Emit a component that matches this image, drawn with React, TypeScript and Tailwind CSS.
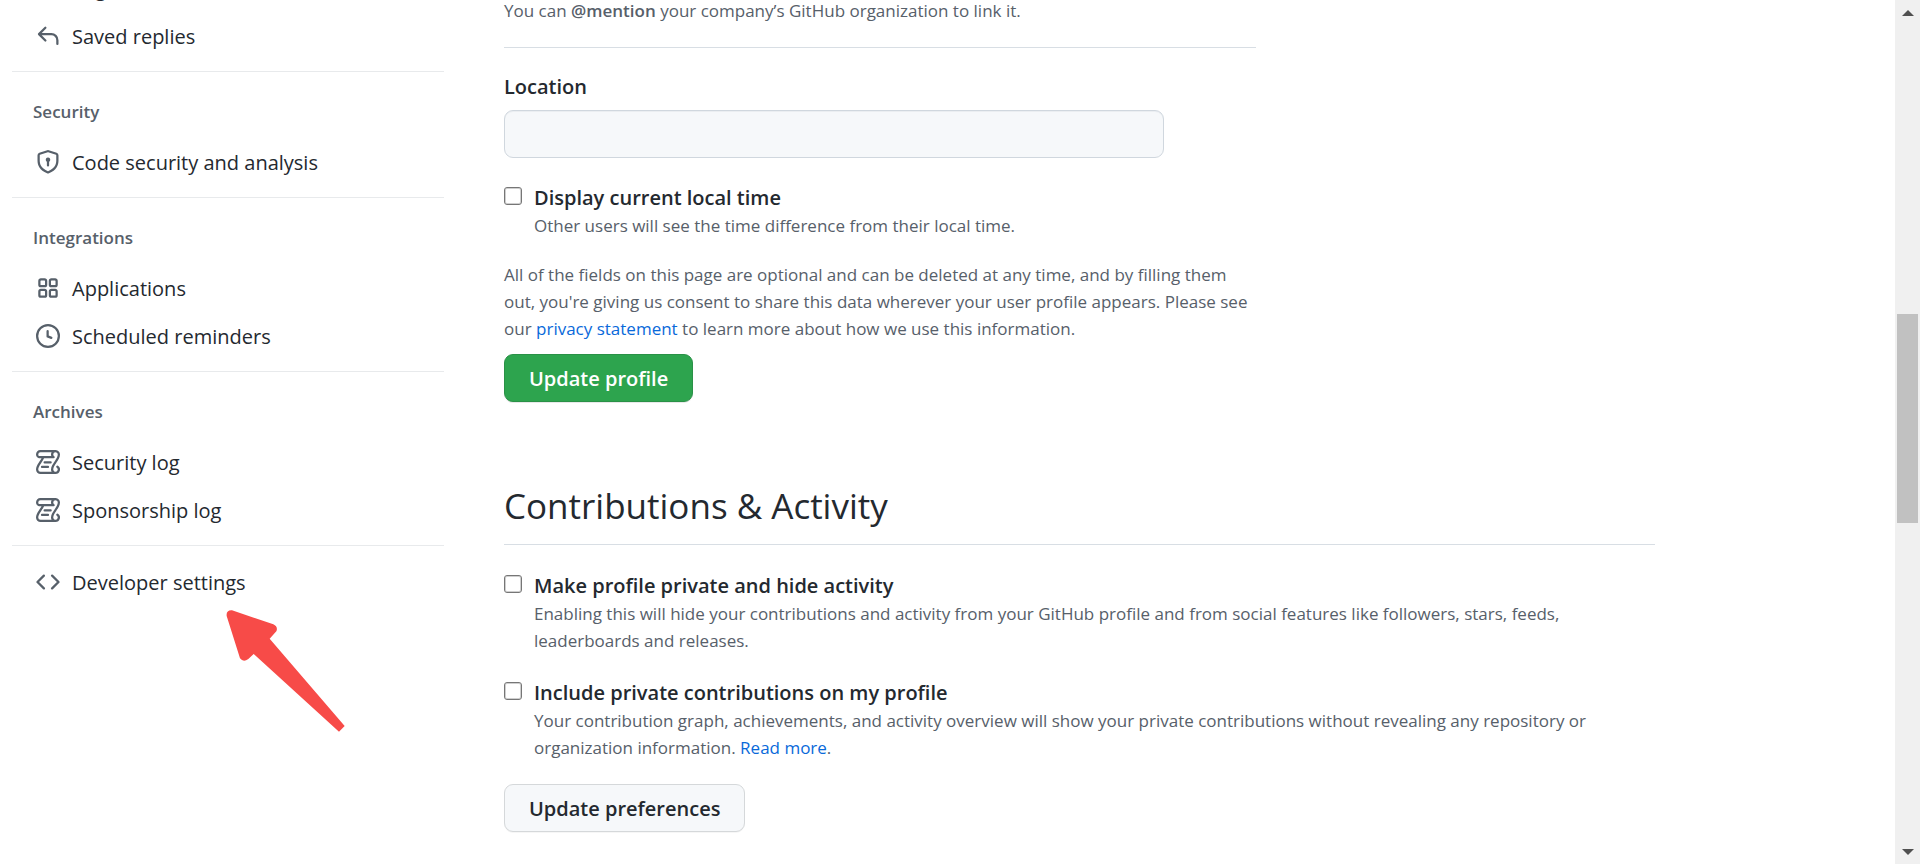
import type { ReactNode } from "react";

const icons = {
  browser:
    "M0 2.75C0 1.784.784 1 1.75 1h12.5c.966 0 1.75.784 1.75 1.75v10.5A1.75 1.75 0 0114.25 15H1.75A1.75 1.75 0 010 13.25V2.75zM14.5 6h-13v7.25c0 .138.112.25.25.25h12.5a.25.25 0 00.25-.25V6z",
  reply:
    "M6.78 1.97a.75.75 0 010 1.06L3.81 6h6.44A4.75 4.75 0 0115 10.75v2.5a.75.75 0 01-1.5 0v-2.5a3.25 3.25 0 00-3.25-3.25H3.81l2.97 2.97a.75.75 0 11-1.06 1.06L1.47 7.28a.75.75 0 010-1.06l4.25-4.25a.75.75 0 011.06 0z",
  shield:
    "M8.533.133a1.75 1.75 0 00-1.066 0l-5.25 1.68A1.75 1.75 0 001 3.48V7c0 1.566.32 3.182 1.303 4.682.983 1.498 2.585 2.813 5.032 3.855a1.7 1.7 0 001.33 0c2.447-1.042 4.049-2.357 5.032-3.855C14.68 10.182 15 8.566 15 7V3.48a1.75 1.75 0 00-1.217-1.667L8.533.133zm-.61 1.429a.25.25 0 01.153 0l5.25 1.68a.25.25 0 01.174.238V7c0 1.358-.275 2.666-1.057 3.86-.784 1.194-2.121 2.34-4.366 3.297a.2.2 0 01-.154 0c-2.245-.956-3.582-2.104-4.366-3.298C2.775 9.666 2.5 8.36 2.5 7V3.48a.25.25 0 01.174-.237l5.25-1.68zM9.5 6.5a1.5 1.5 0 01-.75 1.3v2.45a.75.75 0 01-1.5 0V7.8A1.5 1.5 0 119.5 6.5z",
  apps:
    "M1.5 3.25c0-.966.784-1.75 1.75-1.75h2.5c.966 0 1.75.784 1.75 1.75v2.5A1.75 1.75 0 015.75 7.5h-2.5A1.75 1.75 0 011.5 5.75v-2.5zM3.25 3a.25.25 0 00-.25.25v2.5c0 .138.112.25.25.25h2.5A.25.25 0 006 5.75v-2.5A.25.25 0 005.75 3h-2.5zM1.5 10.25c0-.966.784-1.75 1.75-1.75h2.5c.966 0 1.75.784 1.75 1.75v2.5a1.75 1.75 0 01-1.75 1.75h-2.5a1.75 1.75 0 01-1.75-1.75v-2.5zm1.75-.25a.25.25 0 00-.25.25v2.5c0 .138.112.25.25.25h2.5a.25.25 0 00.25-.25v-2.5a.25.25 0 00-.25-.25h-2.5zM8.5 3.25c0-.966.784-1.75 1.75-1.75h2.5c.966 0 1.75.784 1.75 1.75v2.5a1.75 1.75 0 01-1.75 1.75h-2.5A1.75 1.75 0 018.5 5.75v-2.5zM10.25 3a.25.25 0 00-.25.25v2.5c0 .138.112.25.25.25h2.5a.25.25 0 00.25-.25v-2.5a.25.25 0 00-.25-.25h-2.5zM8.5 10.25c0-.966.784-1.75 1.75-1.75h2.5c.966 0 1.75.784 1.75 1.75v2.5a1.75 1.75 0 01-1.75 1.75h-2.5a1.75 1.75 0 01-1.75-1.75v-2.5zm1.75-.25a.25.25 0 00-.25.25v2.5c0 .138.112.25.25.25h2.5a.25.25 0 00.25-.25v-2.5a.25.25 0 00-.25-.25h-2.5z",
  clock:
    "M1.5 8a6.5 6.5 0 1113 0 6.5 6.5 0 01-13 0zM8 0a8 8 0 100 16A8 8 0 008 0zm.5 4.75a.75.75 0 00-1.5 0v3.5a.75.75 0 00.471.696l2.5 1a.75.75 0 00.557-1.392L8.5 7.742V4.75z",
  log:
    "M5 8.25a.75.75 0 01.75-.75h4a.75.75 0 010 1.5h-4A.75.75 0 015 8.25zM4 10.5A.75.75 0 004 12h4a.75.75 0 000-1.5H4zM13-.005c1.654 0 3 1.328 3 3 0 .982-.338 1.933-.783 2.818-.443.879-1.028 1.758-1.582 2.588l-.011.017c-.568.853-1.104 1.659-1.501 2.446-.398.789-.623 1.494-.623 2.136a1.5 1.5 0 102.333-1.248.75.75 0 01.834-1.246A3 3 0 0113 16H3a3 3 0 01-3-3c0-1.582.891-3.135 1.777-4.506.209-.322.418-.637.623-.946.473-.709.923-1.386 1.287-2.048H2.51c-.576 0-1.381-.133-1.907-.783A2.68 2.68 0 010 2.995a3 3 0 013-3h10zm0 1.5a1.5 1.5 0 00-1.5 1.5c0 .476.223.834.667 1.132A.75.75 0 0111.75 5.5H5.368c-.467 1.003-1.141 2.015-1.773 2.963-.192.289-.381.571-.558.845C2.13 10.711 1.5 11.916 1.5 13A1.5 1.5 0 003 14.5h7.401A2.989 2.989 0 0110 13c0-.979.338-1.928.784-2.812.441-.874 1.023-1.748 1.575-2.576l.017-.026c.568-.853 1.103-1.658 1.501-2.448.398-.79.623-1.497.623-2.143 0-.838-.669-1.5-1.5-1.5zm-10 0a1.5 1.5 0 00-1.5 1.5c0 .321.1.569.27.778.097.12.325.227.74.227h7.674A2.737 2.737 0 0110 2.995c0-.546.146-1.059.401-1.5H3z",
  code:
    "M4.72 3.22a.75.75 0 011.06 1.06L2.06 8l3.72 3.72a.75.75 0 11-1.06 1.06L.47 8.53a.75.75 0 010-1.06l4.25-4.25zm6.56 0a.75.75 0 10-1.06 1.06L13.94 8l-3.72 3.72a.75.75 0 101.06 1.06l4.25-4.25a.75.75 0 000-1.06l-4.25-4.25z",
};

type Item = { label: string; icon: keyof typeof icons };
type Group = { title?: string; items: Item[] };

const groups: Group[] = [
  { items: [{ label: "Pages", icon: "browser" }, { label: "Saved replies", icon: "reply" }] },
  { title: "Security", items: [{ label: "Code security and analysis", icon: "shield" }] },
  {
    title: "Integrations",
    items: [
      { label: "Applications", icon: "apps" },
      { label: "Scheduled reminders", icon: "clock" },
    ],
  },
  {
    title: "Archives",
    items: [
      { label: "Security log", icon: "log" },
      { label: "Sponsorship log", icon: "log" },
    ],
  },
  { items: [{ label: "Developer settings", icon: "code" }] },
];

function NavGroup({ title, items }: Group) {
  return (
    <section className="mt-3 border-b border-[#e8eaec] pb-[11px] first:mt-0 last:border-b-0">
      {title && (
        <h3 className="flex h-[54px] items-center pt-0.5 pl-[21px] text-[17px] font-semibold text-[#57606a]">
          {title}
        </h3>
      )}
      <ul>
        {items.map(({ label, icon }) => (
          <li key={label}>
            <a href="#" className="flex h-12 items-center gap-3 pl-6 text-[20px] text-[#24292f]">
              <svg viewBox="0 0 16 16" className="size-6 shrink-0 fill-[#57606a]" aria-hidden="true">
                <path fillRule="evenodd" d={icons[icon]} />
              </svg>
              <span className="pt-0.5">{label}</span>
            </a>
          </li>
        ))}
      </ul>
    </section>
  );
}

function CheckField({ id, label, children }: { id: string; label: string; children: ReactNode }) {
  return (
    <div className="flex items-start gap-3">
      <input
        id={id}
        type="checkbox"
        className="mt-1 size-[18px] shrink-0 appearance-none rounded-[3px] border border-[#767676] bg-white shadow-[inset_0_0_0_1px_rgba(118,118,118,0.35)] checked:bg-[#0969da]"
      />
      <div>
        <label htmlFor={id} className="block pt-px text-[20px] leading-7 font-semibold">
          {label}
        </label>
        <p className="text-[17px] leading-[27px] text-[#57606a]">{children}</p>
      </div>
    </div>
  );
}

function Scrollbar() {
  return (
    <div className="flex w-[25px] shrink-0 flex-col bg-[#f0f0f0]" aria-hidden="true">
      <div className="flex h-[25px] items-center justify-center">
        <svg viewBox="0 0 12 6" className="h-1.5 w-3 fill-[#505050]">
          <path d="M6 0l6 6H0z" />
        </svg>
      </div>
      <div className="flex-[289_1_0%]" />
      <div className="mx-0.5 flex-[209_1_0%] bg-[#c1c1c1]" />
      <div className="flex-[316_1_0%]" />
      <div className="flex h-[25px] items-center justify-center">
        <svg viewBox="0 0 12 6" className="h-1.5 w-3 fill-[#505050]">
          <path d="M0 0h12L6 6z" />
        </svg>
      </div>
    </div>
  );
}

export default function App() {
  return (
    <div className="relative flex h-screen overflow-hidden bg-white font-['Open_Sans','Noto_Sans',sans-serif] text-[#24292f]">
      <nav className="-mt-9 ml-3 w-[432px] shrink-0" aria-label="Settings">
        {groups.map((group, i) => (
          <NavGroup key={i} {...group} />
        ))}
      </nav>

      <main className="-mt-[3px] ml-[60px] min-w-0 flex-1 pr-60">
        <form className="max-w-[752px]">
          <p className="border-b border-[#d8dee4] pb-[23px] text-[17px] leading-[27px] text-[#57606a]">
            You can <strong className="font-semibold">@mention</strong> your company’s GitHub organization to link it.
          </p>
          <label htmlFor="location" className="mt-[25px] block text-[20px] leading-7 font-semibold">
            Location
          </label>
          <input
            id="location"
            type="text"
            className="mt-[9px] block h-12 w-full max-w-[660px] rounded-[9px] border border-[#d0d7de] bg-[#f6f8fa] px-[18px] text-[20px] shadow-[inset_0_1px_0_rgba(208,215,222,0.3)]"
          />
          <div className="mt-[25px]">
            <CheckField id="local-time" label="Display current local time">
              Other users will see the time difference from their local time.
            </CheckField>
          </div>
          <p className="mt-[22px] text-[17px] leading-[27px] text-[#57606a]">
            All of the fields on this page are optional and can be deleted at any time, and by filling them out,
            you're giving us consent to share this data wherever your user profile appears. Please see our{" "}
            <a href="#" className="text-[#0969da]">
              privacy statement
            </a>{" "}
            to learn more about how we use this information.
          </p>
          <button
            type="button"
            className="mt-3 h-12 rounded-[9px] border border-[#2a9147] bg-[#2da44e] px-6 pt-0.5 text-[20px] font-semibold text-white shadow-[0_1px_0_rgba(27,31,36,0.1)]"
          >
            Update profile
          </button>
        </form>

        <form className="mt-[78px]">
          <h2 className="border-b border-[#d8dee4] pb-3 text-[35px] leading-[52px]">Contributions &amp; Activity</h2>
          <div className="mt-[26px] flex flex-col gap-6 pr-10">
            <CheckField id="private-profile" label="Make profile private and hide activity">
              Enabling this will hide your contributions and activity from your GitHub profile and from social
              features like followers, stars, feeds, leaderboards and releases.
            </CheckField>
            <CheckField id="private-contributions" label="Include private contributions on my profile">
              Your contribution graph, achievements, and activity overview will show your private contributions
              without revealing any repository or organization information.{" "}
              <a href="#" className="text-[#0969da]">
                Read more
              </a>
              .
            </CheckField>
          </div>
          <button
            type="button"
            className="mt-[23px] h-12 rounded-[9px] border border-[#d5d8da] bg-[#f6f8fa] px-6 pt-0.5 text-[20px] font-semibold shadow-[0_1px_0_rgba(27,31,36,0.04)]"
          >
            Update preferences
          </button>
        </form>
      </main>

      <Scrollbar />

      <svg
        viewBox="0 0 510 480"
        className="pointer-events-none absolute top-[590px] left-[200px] h-40 w-[170px] fill-[#f74b48]"
        aria-hidden="true"
      >
        <path d="M80 78Q78 60 96 61L220 103Q235 111 229 124L209 146L434 408L417 425L161 192L145 207Q130 218 120 205Z" />
      </svg>
    </div>
  );
}
